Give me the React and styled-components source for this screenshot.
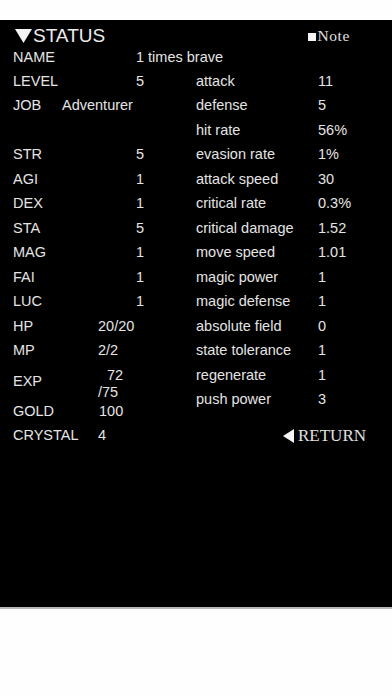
import React from "react";
import styled, { createGlobalStyle } from "styled-components";

const GlobalStyle = createGlobalStyle`
  html, body {
    margin: 0;
    padding: 0;
    background: #fefefe;
  }
  * {
    box-sizing: border-box;
  }
`;

const leftRows = [
  { label: "LEVEL", value: "5", at: 123 },
  { label: "JOB", value: "Adventurer", at: 49 },
  { label: "", value: "", at: 123 },
  { label: "STR", value: "5", at: 123 },
  { label: "AGI", value: "1", at: 123 },
  { label: "DEX", value: "1", at: 123 },
  { label: "STA", value: "5", at: 123 },
  { label: "MAG", value: "1", at: 123 },
  { label: "FAI", value: "1", at: 123 },
  { label: "LUC", value: "1", at: 123 },
  { label: "HP", value: "20/20", at: 85 },
  { label: "MP", value: "2/2", at: 85 },
];

const bottomRows = [
  { label: "GOLD", value: "100", at: 86 },
  { label: "CRYSTAL", value: "4", at: 85 },
];

const rightRows = [
  { label: "attack", value: "11" },
  { label: "defense", value: "5" },
  { label: "hit rate", value: "56%" },
  { label: "evasion rate", value: "1%" },
  { label: "attack speed", value: "30" },
  { label: "critical rate", value: "0.3%" },
  { label: "critical damage", value: "1.52" },
  { label: "move speed", value: "1.01" },
  { label: "magic power", value: "1" },
  { label: "magic defense", value: "1" },
  { label: "absolute field", value: "0" },
  { label: "state tolerance", value: "1" },
  { label: "regenerate", value: "1" },
  { label: "push power", value: "3" },
];

const Page = styled.div`
  width: 392px;
  height: 696px;
  padding-top: 20px;
  background: #fefefe;
  overflow: hidden;
`;

const Screen = styled.div`
  height: 589px;
  background: #000;
  border-bottom: 2px solid #b8b8b8;
  padding-left: 13px;
  color: #e4e4e4;
  font-family: "Liberation Sans", Arial, sans-serif;
  font-size: 14.5px;
`;

const Header = styled.div`
  display: flex;
  align-items: center;
  justify-content: space-between;
  height: 26px;
  padding: 6px 42px 0 2px;
`;

const Title = styled.div`
  display: flex;
  align-items: center;
  gap: 1px;
  font-size: 19px;
  line-height: 20px;
  color: #ececec;
`;

const Note = styled.div`
  display: flex;
  align-items: center;
  font-family: "Liberation Serif", "Times New Roman", serif;
  font-size: 15.5px;
  letter-spacing: 0.6px;
  line-height: 20px;
  color: #e0e0e0;
`;

const Square = styled.span`
  width: 8px;
  height: 8px;
  background: #f4f4f4;
  margin-right: 1px;
  margin-top: 1px;
`;

const Row = styled.div`
  display: flex;
  align-items: ${(p) => (p.$top ? "flex-start" : "center")};
  height: ${(p) => p.$h || 24.5}px;
  white-space: nowrap;
`;

const Label = styled.span`
  flex: 0 0 ${(p) => p.$w}px;
  align-self: center;
`;

const Value = styled.span``;

const ExpValue = styled.div`
  display: flex;
  flex-direction: column;
  padding-top: 4px;
  line-height: 17.5px;
`;

const ExpTop = styled.span`
  padding-left: 9px;
`;

const Columns = styled.div`
  display: flex;
  margin-top: 1.5px;
`;

const LeftCol = styled.div`
  flex: 0 0 183px;
  display: flex;
  flex-direction: column;
`;

const RightCol = styled.div`
  flex: 1;
  display: flex;
  flex-direction: column;
`;

const Return = styled.div`
  display: flex;
  align-items: center;
  justify-content: flex-end;
  gap: 4px;
  height: 24.5px;
  margin-top: 12px;
  padding-right: 26px;
  font-family: "Liberation Serif", "Times New Roman", serif;
  font-size: 17px;
  color: #e0e0e0;
`;

const App = () => (
  <>
    <GlobalStyle />
    <Page>
      <Screen>
        <Header>
          <Title>
            <svg width="17" height="14" viewBox="0 0 17 14">
              <polygon points="0,0 17,0 8.5,14" fill="#f4f4f4" />
            </svg>
            STATUS
          </Title>
          <Note>
            <Square />
            Note
          </Note>
        </Header>
        <Row $h={21}>
          <Label $w={123}>NAME</Label>
          <Value>1 times brave</Value>
        </Row>
        <Columns>
          <LeftCol>
            {leftRows.map((r, i) => (
              <Row key={i}>
                <Label $w={r.at}>{r.label}</Label>
                <Value>{r.value}</Value>
              </Row>
            ))}
            <Row $h={36} $top>
              <Label $w={85}>EXP</Label>
              <ExpValue>
                <ExpTop>72</ExpTop>
                <span>/75</span>
              </ExpValue>
            </Row>
            {bottomRows.map((r) => (
              <Row key={r.label}>
                <Label $w={r.at}>{r.label}</Label>
                <Value>{r.value}</Value>
              </Row>
            ))}
          </LeftCol>
          <RightCol>
            {rightRows.map((r) => (
              <Row key={r.label}>
                <Label $w={122}>{r.label}</Label>
                <Value>{r.value}</Value>
              </Row>
            ))}
            <Return>
              <svg width="11" height="14" viewBox="0 0 11 14">
                <polygon points="11,0 11,14 0,7" fill="#f4f4f4" />
              </svg>
              RETURN
            </Return>
          </RightCol>
        </Columns>
      </Screen>
    </Page>
  </>
);

export default App;
